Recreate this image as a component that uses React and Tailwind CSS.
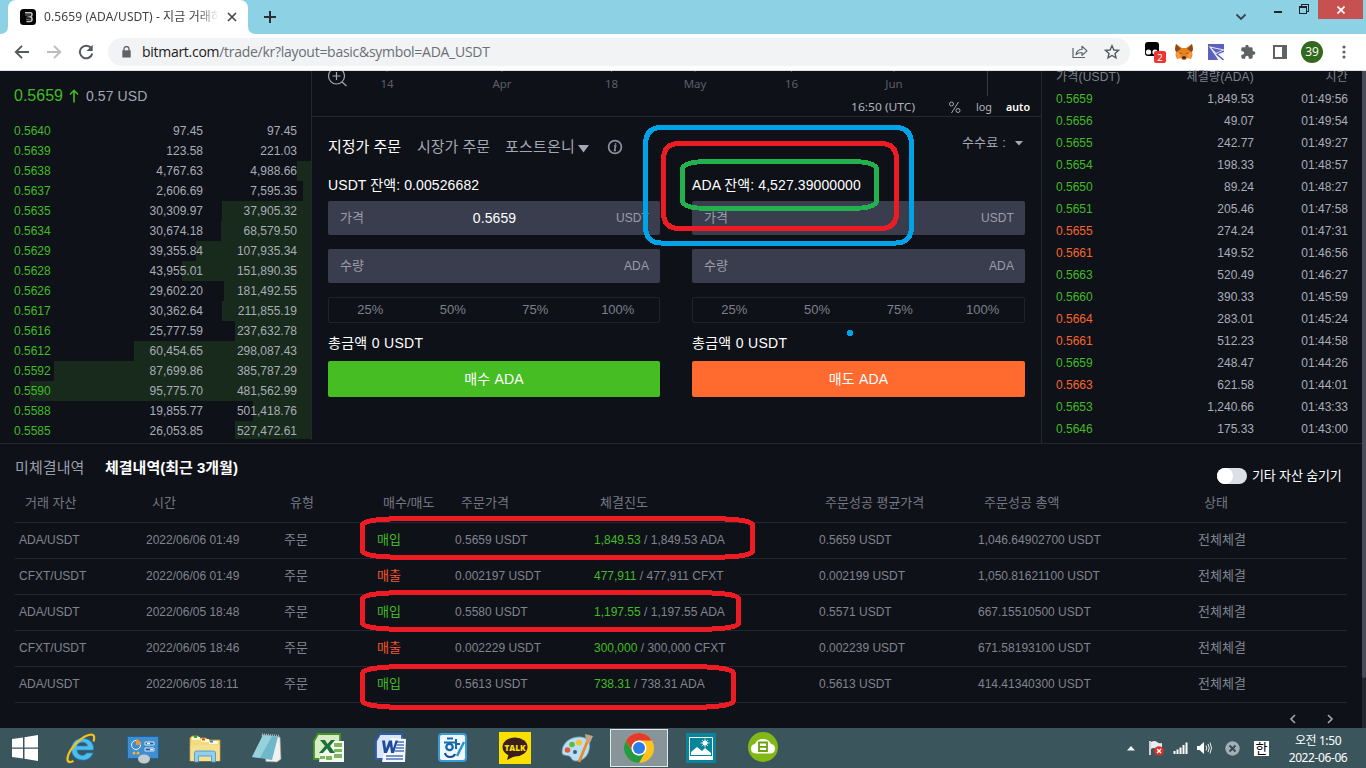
import React from "react";

const bids = [
  ["0.5640", "97.45", "97.45", 0],
  ["0.5639", "123.58", "221.03", 0],
  ["0.5638", "4,767.63", "4,988.66", 14],
  ["0.5637", "2,606.69", "7,595.35", 8],
  ["0.5635", "30,309.97", "37,905.32", 89],
  ["0.5634", "30,674.18", "68,579.50", 90],
  ["0.5629", "39,355.84", "107,935.34", 115],
  ["0.5628", "43,955.01", "151,890.35", 129],
  ["0.5626", "29,602.20", "181,492.55", 87],
  ["0.5617", "30,362.64", "211,855.19", 89],
  ["0.5616", "25,777.59", "237,632.78", 76],
  ["0.5612", "60,454.65", "298,087.43", 177],
  ["0.5592", "87,699.86", "385,787.29", 257],
  ["0.5590", "95,775.70", "481,562.99", 281],
  ["0.5588", "19,855.77", "501,418.76", 58],
  ["0.5585", "26,053.85", "527,472.61", 76],
];

const trades = [
  ["0.5659", "1,849.53", "01:49:56", 1],
  ["0.5656", "49.07", "01:49:54", 1],
  ["0.5655", "242.77", "01:49:27", 1],
  ["0.5654", "198.33", "01:48:57", 1],
  ["0.5650", "89.24", "01:48:27", 1],
  ["0.5651", "205.46", "01:47:58", 1],
  ["0.5655", "274.24", "01:47:31", 0],
  ["0.5661", "149.52", "01:46:56", 0],
  ["0.5663", "520.49", "01:46:27", 1],
  ["0.5660", "390.33", "01:45:59", 1],
  ["0.5664", "283.01", "01:45:24", 0],
  ["0.5661", "512.23", "01:44:58", 0],
  ["0.5659", "248.47", "01:44:26", 1],
  ["0.5663", "621.58", "01:44:01", 0],
  ["0.5653", "1,240.66", "01:43:33", 1],
  ["0.5646", "175.33", "01:43:00", 1],
];

const orders = [
  ["ADA/USDT", "2022/06/06 01:49", 1, "0.5659", "1,849.53", "ADA", "0.5659", "1,046.64902700"],
  ["CFXT/USDT", "2022/06/06 01:49", 0, "0.002197", "477,911", "CFXT", "0.002199", "1,050.81621100"],
  ["ADA/USDT", "2022/06/05 18:48", 1, "0.5580", "1,197.55", "ADA", "0.5571", "667.15510500"],
  ["CFXT/USDT", "2022/06/05 18:46", 0, "0.002229", "300,000", "CFXT", "0.002239", "671.58193100"],
  ["ADA/USDT", "2022/06/05 18:11", 1, "0.5613", "738.31", "ADA", "0.5613", "414.41340300"],
];

const cols = "grid grid-cols-[127px_138px_93px_78px_139px_225px_159px_220px_1fr] items-center";

function TabStrip() {
  return (
    <div className="flex h-[34px] shrink-0 bg-[#8cd2e4] font-['Noto_Sans','Noto_Sans_CJK_KR',sans-serif]">
      <svg width="8" height="34" className="shrink-0"><path d="M0 34Q8 34 8 26V34Z" fill="#fff" /></svg>
      <div className="flex h-[34px] w-[240px] shrink-0 items-center rounded-t-lg bg-white pl-3">
        <svg width="16" height="16" viewBox="0 0 16 16" className="shrink-0">
          <rect width="16" height="16" rx="3.500" fill="#050505" />
          <path d="M5 3.800h5.500c2 0 2 3.200-.2 4 2.600.8 2.200 4.700-.3 4.700H6.500" fill="none" stroke="#c4c4c4" strokeWidth="1.600" />
          <path d="M5 6h5M6.500 8h3.500M6 10.300h4.500" fill="none" stroke="#8b8b8b" strokeWidth=".9" />
        </svg>
        <div className="ml-2 w-[175px] overflow-hidden whitespace-nowrap text-[12px] leading-5 tracking-[0.12px] text-[#3f4246] [mask-image:linear-gradient(to_right,black_88%,transparent)]">
          0.5659 (ADA/USDT) - 지금 거래하
        </div>
        <svg width="10" height="10" viewBox="0 0 10 10" className="ml-2"><path d="M1 1l8 8M9 1l-8 8" stroke="#45494d" strokeWidth="1.700" /></svg>
      </div>
      <svg width="8" height="34" className="shrink-0"><path d="M8 34Q0 34 0 26V34Z" fill="#fff" /></svg>
      <svg width="12" height="12" viewBox="0 0 12 12" className="ml-2 mt-[11px]"><path d="M6 0v12M0 6h12" stroke="#2b2f33" strokeWidth="2" /></svg>
      <div className="flex flex-1 items-start justify-end">
        <svg width="12" height="8" viewBox="0 0 12 8" className="mr-[27px] mt-[13px]"><path d="M1.500 1.500L6 6l4.500-4.500" fill="none" stroke="#35434a" strokeWidth="1.800" /></svg>
        <div className="mr-[17px] mt-[11px] h-[2px] w-2 bg-[#1c2528]" />
        <svg width="10" height="10" viewBox="0 0 10 10" className="mr-[9px] mt-1" shapeRendering="crispEdges">
          <path d="M.5 2.500h7v7h-7zM0 3.500h8M2.500 2V.5h7v7H8" fill="none" stroke="#1c2528" />
        </svg>
        <div className="mr-[3px] flex h-[19px] w-[45px] items-center justify-center bg-[#c75050]">
          <svg width="8" height="8" viewBox="0 0 8 8"><path d="M.5.5l7 7M7.500.5l-7 7" stroke="#fff" strokeWidth="1.700" /></svg>
        </div>
      </div>
    </div>
  );
}

function Toolbar() {
  return (
    <div className="flex h-[37px] shrink-0 items-center border-b border-[#dbe3e2] bg-white pl-[14px] font-['Open_Sans',sans-serif]">
      <svg width="16" height="16" viewBox="0 0 16 16"><path d="M15 8H2.500M8 1.800L1.800 8 8 14.200" fill="none" stroke="#55595e" strokeWidth="1.900" /></svg>
      <svg width="16" height="16" viewBox="0 0 16 16" className="ml-4"><path d="M1 8h12.500M8 1.800L14.200 8 8 14.200" fill="none" stroke="#babcbe" strokeWidth="1.900" /></svg>
      <svg width="16" height="16" viewBox="0 0 16 16" className="ml-4">
        <path d="M13.300 4.300A6.300 6.300 0 1 0 14.300 9.500" fill="none" stroke="#55595e" strokeWidth="2" />
        <path d="M14.700.8v6.200H8.500z" fill="#55595e" />
      </svg>
      <div className="ml-[14px] flex h-7 w-[1022px] items-center rounded-full bg-[#f1f3f4] pl-[14px] text-[14px]">
        <svg width="9" height="12" viewBox="0 0 9 12"><path d="M.3 4.300h8.400v7.200H.3z" fill="#5f6368" /><path d="M2 5V3a2.500 2.500 0 0 1 5 0v2" fill="none" stroke="#5f6368" strokeWidth="1.300" /></svg>
        <div className="ml-[11px] flex-1 whitespace-nowrap leading-5 tracking-[-0.28px] text-[#6b6f74]"><span className="text-[#202124]">bitmart.com</span>/trade/kr?layout=basic&amp;symbol=ADA_USDT</div>
        <svg width="16" height="16" viewBox="0 0 16 16" className="mr-4">
          <path d="M1 4v9.500h12M4 10.500c.6-3.600 3-5 6-5V2.300l5 4.600-5 4.400V8.500c-2.600 0-4.500.5-6 2z" fill="none" stroke="#5f6368" strokeWidth="1.200" strokeLinejoin="round" />
        </svg>
        <svg width="16" height="16" viewBox="0 0 16 16" className="mr-[10px]">
          <path d="M8 1.800l1.900 4.200 4.600.4-3.500 3 1 4.500-4-2.400-4 2.400 1-4.500-3.500-3 4.600-.4z" fill="none" stroke="#55595e" strokeWidth="1.400" />
        </svg>
      </div>
      <svg width="22" height="22" viewBox="0 0 22 22" className="ml-[14px]">
        <rect x="1" y="1" width="14" height="14" rx="3" fill="#000" /><circle cx="4.500" cy="11" r="2.600" fill="#fff" /><circle cx="11" cy="11" r="2.600" fill="#fff" />
        <rect x="10" y="10" width="12" height="12" rx="2" fill="#ee3530" />
        <text x="16" y="19.500" fontSize="9.500" fill="#fff" textAnchor="middle" className="font-['Noto_Sans',sans-serif]">2</text>
      </svg>
      <svg width="18" height="16" viewBox="0 0 18 16" className="ml-[9px]">
        <path d="M1 0l6 4h4l6-4 1 5-1 3 .5 3-1.500 4-4-1-1.500 2h-3L6 14l-4 1L.5 11 1 8 0 5z" fill="#e8821e" />
        <path d="M0 5l1 3 5-3-5-5zM18 5l-1 3-5-3 5-5z" fill="#8a4a1c" /><path d="M1 8l5 2-1 4-3 1zM17 8l-5 2 1 4 3 1z" fill="#f59a42" />
        <path d="M5 8.500l2 1.500H5.500zM13 8.500L11 10h1.500z" fill="#27303a" /><path d="M7 13l2-1 2 1-.5 2h-3z" fill="#3c2a22" />
      </svg>
      <svg width="16" height="16" viewBox="0 0 16 16" className="ml-[15px]">
        <rect width="16" height="16" fill="#5c61bd" /><path d="M16 6v10H10L8 9.500z" fill="#f4f4ff" /><path d="M2 3l14 3-8 3.500zM8 9.500l3 6.500L2 3M8 9.500l8 6" fill="none" stroke="#e8e9fa" strokeWidth="1.100" /><path d="M8.500 10l7 6M16 7l-6.500 2.800" stroke="#4a50a8" strokeWidth="1.200" />
      </svg>
      <svg width="16" height="16" viewBox="0 0 24 24" className="ml-4"><path fill="#5f6368" d="M20.500 11H19V7a2 2 0 0 0-2-2h-4V3.500a2.500 2.500 0 0 0-5 0V5H4a2 2 0 0 0-2 2v3.800h1.500a2.700 2.700 0 0 1 0 5.400H2V20a2 2 0 0 0 2 2h3.800v-1.500a2.700 2.700 0 0 1 5.400 0V22H17a2 2 0 0 0 2-2v-4h1.500a2.500 2.500 0 0 0 0-5z" /></svg>
      <svg width="14" height="14" viewBox="0 0 14 14" className="ml-[17px]"><path d="M1 1h12v12H1z" fill="#fff" stroke="#5f6368" strokeWidth="2" /><path d="M9 1h4v12H9z" fill="#5f6368" /></svg>
      <div className="ml-[14px] flex size-[22px] items-center justify-center rounded-full bg-[#33691e] text-[12px] leading-none text-white">39</div>
      <svg width="4" height="14" viewBox="0 0 4 14" className="ml-[19px]"><g fill="#5f6368"><circle cx="2" cy="2" r="1.600" /><circle cx="2" cy="7" r="1.600" /><circle cx="2" cy="12" r="1.600" /></g></svg>
    </div>
  );
}

function OrderBook() {
  return (
    <section className="h-[369px] w-[312px] shrink-0 overflow-hidden border-r border-[#25272f]">
      <div className="flex h-[50px] items-center pl-[14px] text-[14px] text-[#a3a7b2]">
        <span className="text-[16px] text-[#41bc24]">0.5659</span>
        <svg width="10" height="14" viewBox="0 0 10 14" className="ml-[6px] mr-[7px]"><path d="M5 13.500V1.500M1 5.500l4-4 4 4" fill="none" stroke="#41bc24" strokeWidth="1.600" /></svg>
        <span className="tracking-[0.1px]">0.57 USD</span>
      </div>
      <div className="h-[318px] overflow-hidden">
        {bids.map(([p, a, t, w]) => (
          <div key={p} className="relative flex h-5 items-center pl-[14px] text-[12px] text-[#a9adb7]">
            <div className="absolute right-0 top-0 h-5 bg-[#172a1c]" style={{ width: w }} />
            <span className="relative w-[88px] text-[#41bc24]">{p}</span>
            <span className="relative w-[101px] text-right">{a}</span>
            <span className="relative w-[94px] text-right">{t}</span>
          </div>
        ))}
      </div>
    </section>
  );
}

function ChartAxis() {
  const marks = [[75, "14"], [190, "Apr"], [299.5, "18"], [383, "May"], [479.5, "16"], [582, "Jun"]];
  return (
    <div className="h-[46px] border-b border-[#25272f]">
      <svg width="729" height="45" viewBox="0 0 729 45" className="font-['Noto_Sans',sans-serif]">
        {marks.map(([x, t]) => (
          <g key={t}>
            <path d={`M${x} 0v1`} stroke="#50535e" />
            <text x={x} y="17" fontSize="11.500" textAnchor="middle" fill="#5c5f69">{t}</text>
          </g>
        ))}
        <path d="M675.500 0v25" stroke="#363843" />
        <g fill="none" stroke="#a5a8b2" strokeWidth="1.200"><circle cx="24.500" cy="5" r="8" /><path d="M20.500 5h8M24.500 1v8M30 11l4.500 4" /></g>
        <g fill="#b0b3bc" fontSize="11.500">
          <text x="539" y="40" textLength="64" lengthAdjust="spacingAndGlyphs">16:50 (UTC)</text>
          <g fill="none" stroke="#a5a8b2" strokeWidth="1"><circle cx="639.500" cy="33" r="2" /><circle cx="646" cy="39.500" r="2" /><path d="M646.500 31l-7 11" /></g>
          <text x="664" y="40" textLength="16" lengthAdjust="spacingAndGlyphs">log</text>
          <text x="694" y="40" textLength="24" lengthAdjust="spacingAndGlyphs" fill="#fff" fontWeight="600">auto</text>
        </g>
      </svg>
    </div>
  );
}

function Field({ label, value, unit }) {
  return (
    <div className="mb-[14px] flex h-[34px] items-center justify-between rounded-[2px] bg-[#3a3d4e] pl-3 pr-[11px] text-[12px] text-[#9a9eaa]">
      <span className="w-9 text-[13px]">{label}</span>
      <span className="text-[14px] tracking-[0.1px] text-white">{value}</span>
      <span className="w-9 text-right tracking-[0.1px]">{unit}</span>
    </div>
  );
}

function OrderSide({ balance, price, action, color, width }) {
  return (
    <div className={width}>
      <div className="h-4 whitespace-nowrap text-[14px] leading-4 tracking-[0.1px] text-white">{balance}</div>
      <div className="mt-2">
        <Field label="가격" value={price} unit="USDT" />
        <Field label="수량" value="" unit="ADA" />
      </div>
      <div className="grid h-[26px] grid-cols-4 items-center rounded-[2px] border border-[#20222c] text-center text-[13px] text-[#7c808c]">
        <span>25%</span><span>50%</span><span>75%</span><span>100%</span>
      </div>
      <div className="mt-3 h-4 text-[14px] leading-4 tracking-[0.3px] text-white">총금액 0 USDT</div>
      <div className={`mt-[10px] flex h-9 items-center justify-center rounded-[2px] pt-px text-[14px] tracking-[0.2px] text-white ${color}`}>{action}</div>
    </div>
  );
}

function TradeForm() {
  return (
    <section className="h-[372px] w-[729px] shrink-0">
      <ChartAxis />
      <div className="flex h-[60px] items-center px-4 text-[15px] text-[#a3a7b2]">
        <span className="w-[89px] whitespace-nowrap text-white">지정가 주문</span>
        <span className="w-[88px] whitespace-nowrap">시장가 주문</span>
        <span className="tracking-[0.2px]">포스트온니</span>
        <svg width="11" height="8" viewBox="0 0 11 8" className="ml-[3px] mt-1"><path d="M0 0h11L5.500 7.500z" fill="#a3a7b2" /></svg>
        <svg width="16" height="16" viewBox="0 0 16 16" className="ml-[18px]"><circle cx="8" cy="8" r="6.400" fill="none" stroke="#8d919d" strokeWidth="1.700" /><path d="M7 7h1.700L7.500 11.500H9M8.500 4.300v1.400" fill="none" stroke="#8d919d" strokeWidth="1.500" /></svg>
        <span className="ml-auto mb-2 text-[13px] tracking-[0.2px]">수수료 :</span>
        <svg width="8" height="5" viewBox="0 0 8 5" className="mb-[7px] ml-[9px] mr-[2px]"><path d="M0 0h8L4 4.500z" fill="#a3a7b2" /></svg>
      </div>
      <div className="flex justify-between px-4">
        <OrderSide balance="USDT 잔액: 0.00526682" price="0.5659" action="매수 ADA" color="bg-[#45bd23]" width="w-[332px]" />
        <OrderSide balance="ADA 잔액: 4,527.39000000" price="" action="매도 ADA" color="bg-[#ff6a2e]" width="w-[333px]" />
      </div>
    </section>
  );
}

function RecentTrades() {
  return (
    <section className="h-[372px] w-[321px] shrink-0 border-l border-[#25272f] pl-[14px] text-[12px] text-[#a9adb7]">
      <div className="flex h-[17px] items-end tracking-[0.2px] text-[#7c808d]">
        <span className="w-[85px] leading-[22px]">가격(USDT)</span>
        <span className="w-[113px] text-right leading-[22px]">체결량(ADA)</span>
        <span className="w-[94px] text-right leading-[22px]">시간</span>
      </div>
      {trades.map(([p, a, t, up]) => (
        <div key={t} className="flex h-[22px] items-center">
          <span className={up ? "w-[65px] text-[#41bc24]" : "w-[65px] text-[#f9652d]"}>{p}</span>
          <span className="w-[133px] text-right">{a}</span>
          <span className="w-[94px] text-right">{t}</span>
        </div>
      ))}
    </section>
  );
}

function History() {
  return (
    <section className="flex h-[284px] flex-col border-t border-[#25272f] pl-[15px] pr-[15px]">
      <div className="flex h-[48px] items-center text-[15px] text-[#9a9eaa]">
        <span className="w-[90px] tracking-[0.1px]">미체결내역</span>
        <span className="whitespace-nowrap text-[15px] font-bold text-white">체결내역(최근 3개월)</span>
        <div className="ml-auto mt-4 flex items-center text-[13px] text-white">
          <div className="mr-[5px] h-4 w-[30px] rounded-full bg-[#dcdfe6]"><div className="size-4 rounded-full bg-white" /></div>
          <span className="w-[95px] whitespace-nowrap leading-4 tracking-[-0.15px]">기타 자산 숨기기</span>
        </div>
      </div>
      <div className={`${cols} h-[31px] border-b border-[#25272f] pb-[8px] pl-[10px] text-[13px] leading-5 text-[#747884]`}>
        <span>거래 자산</span><span>시간</span><span>유형</span><span>매수/매도</span><span>주문가격</span><span>체결진도</span><span>주문성공 평균가격</span><span>주문성공 총액</span><span>상태</span>
      </div>
      {orders.map(([pair, time, buy, price, qty, coin, avg, total]) => (
        <div key={total} className={`${cols} h-9 border-b border-[#25272f] pl-1 pb-px text-[12px] text-[#80848f]`}>
          <span>{pair}</span>
          <span>{time}</span>
          <span className="text-[13px] leading-5">주문</span>
          <span className={buy ? "text-[13px] leading-5 text-[#41bc24]" : "text-[13px] leading-5 text-[#f9552d]"}>{buy ? "매입" : "매출"}</span>
          <span>{price} USDT</span>
          <span><span className="text-[#41bc24]">{qty}</span> / {qty} {coin}</span>
          <span>{avg} USDT</span>
          <span>{total} USDT</span>
          <span className="text-[13px] leading-5">전체체결</span>
        </div>
      ))}
      <div className="flex flex-1 items-center justify-end gap-[29px] pr-[13px] pt-[8px]">
        <svg width="8" height="10" viewBox="0 0 8 10"><path d="M6 1L2 5l4 4" fill="none" stroke="#a3a7b2" strokeWidth="1.600" /></svg>
        <svg width="8" height="10" viewBox="0 0 8 10"><path d="M2 1l4 4-4 4" fill="none" stroke="#a3a7b2" strokeWidth="1.600" /></svg>
      </div>
    </section>
  );
}

const icons = [
  <g key="ie">
    <path d="M28.500 18H12c.3 6 7.500 7 9.500 3h6.500c-2 5-6 7.500-11 7-14-1-13.500-20.500-1-21.500 8.500-.8 13 4.500 12.500 11.500zM12 14h10.500c-.5-5-9.500-5-10.500 0z" fill="#4dbdf0" stroke="#1c86cc" strokeWidth=".7" />
    <path d="M28.500 9.500c1.300-4 1-7-2.500-7C18 3 4 16 2.500 26c-.5 5 3 4.500 6 3" fill="none" stroke="#f6c21c" strokeWidth="2.200" />
  </g>,
  <g key="panel">
    <rect x="0.500" y="4.500" width="31" height="22" rx="1" fill="#3e8ed0" stroke="#1c61a4" />
    <circle cx="9" cy="13" r="4.500" fill="none" stroke="#e8f4fd" /><path d="M9 13V7a6 6 0 0 1 5 6z" fill="#f3932b" />
    <path d="M18 10h9v3h-9zM18 16h9v3h-9z" fill="#245f9f" stroke="#d3eafa" /><path d="M20 11.500h3M23 17.500h3" stroke="#fff" strokeWidth="1.500" /><circle cx="7" cy="21" r="1.500" fill="#ffb030" /><circle cx="11" cy="21" r="1.500" fill="#ffb030" />
    <ellipse cx="17" cy="27" rx="6" ry="4.500" fill="#c6cbd0" />
  </g>,
  <g key="folder">
    <path d="M1 6l2-2h6l2 2h6l2 2h12v21H1z" fill="#f3da7d" stroke="#c29b38" strokeWidth=".8" />
    <path d="M3 5h8v3H3zM12 7h8v3h-8zM20 9h9v3h-9z" fill="#fff6cf" /><path d="M5 4h3v2H5z" fill="#1eae48" /><path d="M13 6.500h3v2h-3z" fill="#df4d27" /><path d="M21 8.500h3v2h-3z" fill="#2385df" />
    <path d="M1.500 13h29v16h-29z" fill="#f5df90" /><path d="M5.500 30v-9q0-2 2-2h17q2 0 2 2v9h-4v-6h-13v6z" fill="#91d0ed" stroke="#4293c4" strokeWidth=".8" />
  </g>,
  <g key="notepad">
    <path d="M11 3l18 2 1 22-4 3-11-.5z" fill="#f1f1ed" stroke="#9aa09f" strokeWidth=".7" /><path d="M12 3L1 25l20 3L27 4.500z" fill="#6fb8c9" /><path d="M12 3l9 1-12 22-8-1z" fill="#a8dbe4" opacity=".7" /><path d="M11 2.500l17 1.500" stroke="#a9b6b9" strokeWidth="2.500" strokeDasharray="1 1" />
  </g>,
  <g key="excel">
    <path d="M5 2h22v25H1V9z" fill="#d8ecc8" stroke="#44951f" strokeWidth="1.800" /><path d="M17 9h14v21H6l1-7z" fill="#f4faef" /><path d="M21 11h8v4h-8zM21 17h8v3h-8zM21 22h8v4h-8zM13 24h6v4h-6zM7 24h5v3H7z" fill="#7fb75f" /><path d="M7 8h5l2.500 4L18 8h4l-5 6 5 7h-5l-3-4.500-4 4.500H6l6-7z" fill="#1e7136" />
  </g>,
  <g key="word">
    <path d="M5 2h22v25H1V9z" fill="#dbe6f7" stroke="#2e5cb0" strokeWidth="1.800" /><path d="M16 6l15 1-1 23H7l1-6z" fill="#f4f7fd" /><path d="M22 10h7M22 13h7M21 16h8M20 19h9M11 24h17M11 27h17" stroke="#4d74bd" strokeWidth="1.500" /><path d="M7 8.500h3l1 8 3-8h3l1 8 2.500-8H23L19 21h-3l-1-7-3 7H9z" fill="#1f4b9d" />
  </g>,
  <g key="hangul">
    <rect x="2" y="2" width="27" height="27" rx="3" fill="#eef8fd" stroke="#389bdb" strokeWidth="2" /><path d="M10 6.500h6M7 10.500h11M19 7v10M19 12h4" fill="none" stroke="#1768ae" strokeWidth="2" /><circle cx="12.500" cy="15" r="3.200" fill="none" stroke="#1768ae" strokeWidth="2.300" /><path d="M8 21q1 4 5 4t5-3" fill="none" stroke="#174b99" strokeWidth="2.200" /><path d="M27 10l-7 14" stroke="#2f91ce" strokeWidth="2.500" />
  </g>,
  <g key="talk">
    <path d="M0 0h32v32H0z" fill="#f9e000" /><ellipse cx="16" cy="15" rx="12.500" ry="9.500" fill="#3a1d1d" /><path d="M10 21l-2 7 8-4z" fill="#3a1d1d" /><text x="16" y="18.500" textAnchor="middle" fontSize="9" fontWeight="800" fill="#f9e000" textLength="21" lengthAdjust="spacingAndGlyphs" className="font-['Open_Sans',sans-serif]">TALK</text>
  </g>,
  <g key="paint">
    <path d="M1 20C1 10 11 4 20 5c8 1 10 7 8 13-1 5-5 11-13 11-5 0-4-4-7-5-3-1-7 0-7-4z" fill="#b9dff2" stroke="#6b9fbd" strokeWidth=".8" /><circle cx="6.500" cy="18" r="2.800" fill="#e5583c" /><circle cx="11" cy="12.500" r="2.800" fill="#63b83e" /><circle cx="18" cy="10.500" r="3" fill="#f7c433" /><circle cx="14" cy="20" r="2" fill="#315e7b" /><path d="M27 8l-9 22" stroke="#ea8a2c" strokeWidth="2.800" /><path d="M24 2l8 2-3 7-4-1z" fill="#c3a47d" />
  </g>,
  <g key="chrome">
    <circle cx="16" cy="16" r="15" fill="#fcc31e" /><path d="M3 8.500A15 15 0 0 1 29 8.500H16a7.500 7.500 0 0 0-6.500 11z" fill="#e33b2e" /><path d="M3 8.500A15 15 0 0 0 16 31l6.500-11.300A7.500 7.500 0 0 1 9.500 19.700z" fill="#249a47" /><circle cx="16" cy="16" r="7.500" fill="#fff" /><circle cx="16" cy="16" r="6" fill="#2b7de9" />
  </g>,
  <g key="photos">
    <path d="M1 1h30v30H1z" fill="#07869b" /><path d="M4.500 5.500h23v21h-23z" fill="#07869b" stroke="#fff" /><path d="M4 24h24v4H4zM6 23v-3l6-5 5 4 3-3 6 5v2z" fill="#fff" /><circle cx="20" cy="11" r="2.500" fill="#fff" /><path d="M20 6.500v9M15.500 11h9M17 8l6 6M23 8l-6 6" stroke="#fff" strokeWidth=".7" />
  </g>,
  <g key="cloud">
    <circle cx="16" cy="15" r="15" fill="#81b814" /><path d="M9 21.500a5 4.800 0 0 1-1-9.500 8.500 7.500 0 0 1 16 0 5 4.800 0 0 1-1 9.500z" fill="#fff" /><path d="M12 10.500h8v8.500h-8zM12 14.800h8" fill="none" stroke="#6b9e12" strokeWidth="1.800" />
  </g>,
];

function Taskbar() {
  return (
    <div className="flex h-10 shrink-0 bg-[#3b555d] font-['Noto_Sans','Noto_Sans_CJK_KR',sans-serif]">
      <div className="flex w-[50px] items-center justify-center">
        <svg width="26" height="26" viewBox="0 0 26 26" fill="#fff"><path d="M0 4l11-1.500V12.500H0zM12.500 2.200L26 0v12.500H12.500zM0 13.800h11v9.700L0 22zM12.500 13.800H26V26l-13.500-2.200z" /></svg>
      </div>
      {icons.map((icon, i) => (
        <div key={i} className="flex w-[62px] justify-center pt-px">
          <div className={i === 9 ? "flex h-[38px] w-[58px] items-center justify-center border border-[#e4e8e9] bg-[#87959a]" : "flex h-[38px] w-[58px] items-center justify-center"}>
            <svg width="32" height="32" viewBox="0 0 32 32">{icon}</svg>
          </div>
        </div>
      ))}
      <div className="flex flex-1 items-center justify-end">
        <svg width="8" height="5" viewBox="0 0 8 5" className="mr-[13px]"><path d="M0 4.500L4 0l4 4.500z" fill="#f4f7f7" /></svg>
        <svg width="17" height="16" viewBox="0 0 17 16" className="mr-2"><path d="M2 1v14" stroke="#fff" strokeWidth="1.500" /><path d="M3 2q4-2 6 0t5 1v7q-4 1-6-1t-5 0z" fill="#e8edee" /><circle cx="11" cy="11" r="4.800" fill="#d9302b" /><path d="M9 9l4 4M13 9l-4 4" stroke="#fff" strokeWidth="1.400" /></svg>
        <svg width="16" height="12" viewBox="0 0 16 12" className="mr-[8px]"><path d="M1.500 12V9M4.500 12V7.500M7.500 12V5.500M10.500 12V3M13.500 12V.5" stroke="#fff" strokeWidth="2" /></svg>
        <svg width="15" height="14" viewBox="0 0 15 14" className="mr-[13px]"><path d="M0 5h2.500L7 1v12L2.500 9H0z" fill="#fff" /><path d="M9 4.500q1.500 2.500 0 5M11 3q2.500 4 0 8M13 1.500q3 5.500 0 11" fill="none" stroke="#e8edee" /></svg>
        <svg width="15" height="15" viewBox="0 0 15 15" className="mr-[14px]"><circle cx="7.500" cy="7.500" r="7.200" fill="#a3afb3" /><path d="M4.500 4.500l6 6M10.500 4.500l-6 6" stroke="#344a51" strokeWidth="1.800" /></svg>
        <div className="mr-[19px] flex size-[15px] items-center justify-center bg-white text-[13px] leading-none text-black">한</div>
        <div className="mr-[18px] w-[60px] whitespace-nowrap pt-px text-center text-[12px] leading-[17px] tracking-[-0.4px] text-white">오전 1:50<br />2022-06-06</div>
      </div>
    </div>
  );
}

function ring(l, t, r, b, x, y) {
  return `M${l} ${t + y}C${l} ${t + y * 0.3} ${l + x * 0.35} ${t} ${l + x} ${t}H${r - x}C${r - x * 0.35} ${t} ${r} ${t + y * 0.3} ${r} ${t + y}V${b - y}C${r} ${b - y * 0.3} ${r - x * 0.35} ${b} ${r - x} ${b}H${l + x}C${l + x * 0.35} ${b} ${l} ${b - y * 0.3} ${l} ${b - y}Z`;
}

function Annotations() {
  return (
    <svg width="1366" height="768" viewBox="0 0 1366 768" className="pointer-events-none absolute left-0 top-0" fill="none" strokeWidth="5" shapeRendering="crispEdges">
      <path d={ring(645.5, 127.5, 911.5, 243, 16, 17)} stroke="#00a2e8" />
      <path d={ring(663.5, 143.5, 896.5, 228.5, 16, 16)} stroke="#ed1c24" />
      <path d={ring(682.5, 161.5, 876.5, 208.5, 27, 8)} stroke="#22b14c" />
      <g stroke="#ed1c24">
        <path d={ring(362.5, 518.5, 752.5, 557.5, 52, 6.5)} />
        <path d={ring(362.5, 592.5, 738.5, 629.5, 50, 6.5)} />
        <path d={ring(362.5, 666.5, 733.5, 707.5, 50, 7)} />
      </g>
      <circle cx="850" cy="333" r="3" fill="#00a2e8" />
    </svg>
  );
}

export default function App() {
  return (
    <div className="relative flex h-[768px] w-[1366px] flex-col overflow-hidden bg-[#0f1118]">
      <TabStrip />
      <Toolbar />
      <div className="flex h-[657px] shrink-0 bg-[#0f1118] font-['Liberation_Sans','Noto_Sans_CJK_KR',sans-serif]">
        <main className="w-[1362px] shrink-0">
          <div className="flex h-[372px]">
            <OrderBook />
            <TradeForm />
            <RecentTrades />
          </div>
          <History />
        </main>
        <div className="w-1 bg-[#24262f]"><div className="h-[607px] rounded-b-sm bg-[#494b57]" /></div>
      </div>
      <Taskbar />
      <Annotations />
    </div>
  );
}
